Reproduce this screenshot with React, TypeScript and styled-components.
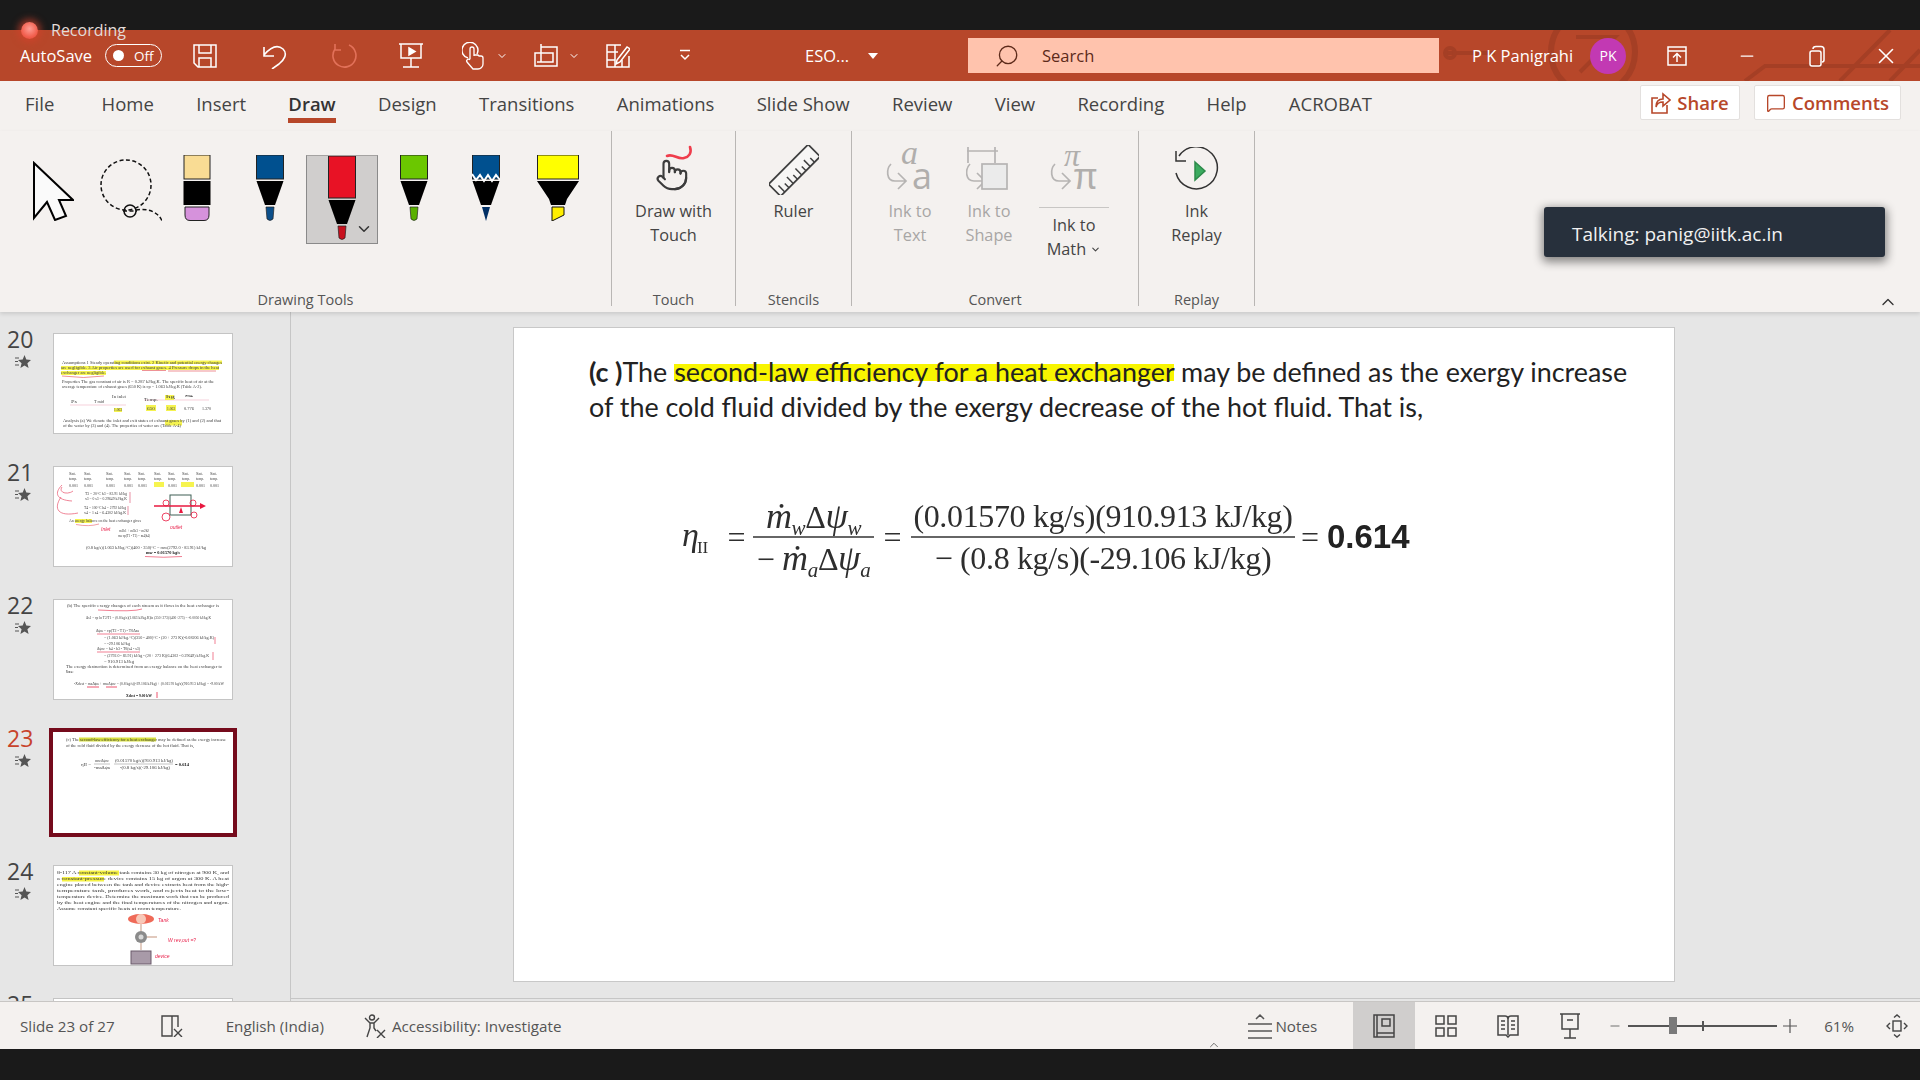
import React from "react";
import styled, { createGlobalStyle } from "styled-components";
import { ChevronDown, ChevronUp, Minus, Pointer, Search, X, MessageSquare } from "lucide-react";

const UI = `"Open Sans", "Noto Sans", sans-serif`;
const BRAND = "#b7472a";

const GlobalStyle = createGlobalStyle`
  html, body { margin: 0; padding: 0; background: #1a1a1a; }
  * { box-sizing: border-box; }
`;

const Shell = styled.div`
  position: relative;
  width: 1920px;
  height: 1080px;
  overflow: hidden;
  display: flex;
  flex-direction: column;
  background: #1a1a1a;
  font-family: ${UI};
`;

const TopStrip = styled.div`
  height: 30px;
  flex: none;
  background: #1a1a1a;
`;

const RecordingBadge = styled.div`
  position: absolute;
  left: 21px;
  top: 19px;
  z-index: 3;
  display: flex;
  align-items: center;
  gap: 13px;
  font-size: 16px;
  line-height: 22px;
  color: #e4dcd8;
`;

const RecordingDot = styled.span`
  width: 17px;
  height: 17px;
  border-radius: 50%;
  background: radial-gradient(circle at 50% 40%, #ff9d94 0%, #f2604f 60%, #e0402f 100%);
  box-shadow: 0 0 7px 3px rgba(214, 66, 44, 0.65);
`;

const TitleBar = styled.div`
  position: relative;
  height: 51px;
  flex: none;
  display: flex;
  align-items: center;
  background: ${BRAND};
  color: #fff;
  overflow: hidden;
`;

const Pattern = styled.svg`
  position: absolute;
  left: 0;
  top: 0;
  pointer-events: none;
`;

const AutoSave = styled.span`
  position: relative;
  margin-left: 20px;
  width: 85px;
  font-size: 16.5px;
`;

const Toggle = styled.span`
  position: relative;
  width: 57px;
  height: 23px;
  display: flex;
  align-items: center;
  gap: 10px;
  padding-left: 7px;
  border: 1.5px solid #fff;
  border-radius: 12px;
  font-size: 13.5px;
  margin-right: 8px;
`;

const Knob = styled.span`
  width: 11px;
  height: 11px;
  border-radius: 50%;
  background: #fff;
`;

const QatButton = styled.span<{ $w: number }>`
  position: relative;
  width: ${(p) => p.$w}px;
  flex: none;
  height: 32px;
  display: flex;
  align-items: center;
  justify-content: center;
  gap: 10px;
`;

const FileName = styled.span`
  position: relative;
  width: 246px;
  flex: none;
  display: flex;
  align-items: center;
  padding-left: 83px;
  font-size: 16.5px;
`;

const Caret = styled.span`
  margin-left: 19px;
  width: 0;
  height: 0;
  border-left: 5px solid transparent;
  border-right: 5px solid transparent;
  border-top: 6px solid #fff;
`;

const SearchBox = styled.div`
  position: relative;
  width: 471px;
  height: 35px;
  flex: none;
  display: flex;
  align-items: center;
  padding-left: 26px;
  gap: 22px;
  background: #ffc3ad;
  color: #5c2a1a;
  font-size: 16.5px;
`;

const SearchGlyph = styled(Search)`
  transform: scaleX(-1);
`;

const UserName = styled.span`
  position: relative;
  margin-left: 33px;
  width: 118px;
  flex: none;
  font-size: 16.5px;
  white-space: nowrap;
`;

const Avatar = styled.span`
  position: relative;
  width: 36px;
  height: 36px;
  flex: none;
  display: flex;
  align-items: center;
  justify-content: center;
  margin-right: 16px;
  border-radius: 50%;
  background: #c239b3;
  font-size: 14px;
`;

const TabRow = styled.div`
  height: 50px;
  flex: none;
  display: flex;
  align-items: flex-start;
  background: #f4f1ef;
`;

const TabList = styled.div`
  display: flex;
  gap: 42.3px;
  padding-left: 25px;
  padding-top: 10px;
  & > :first-child { margin-right: 5px; }
`;

const Tab = styled.span<{ $active?: boolean }>`
  position: relative;
  font-size: 18.5px;
  line-height: 26px;
  color: ${(p) => (p.$active ? "#333" : "#444")};
  font-weight: ${(p) => (p.$active ? 600 : 400)};
  white-space: nowrap;
  &::after {
    content: "";
    display: ${(p) => (p.$active ? "block" : "none")};
    position: absolute;
    left: 0;
    right: 0;
    top: 27px;
    height: 5px;
    background: ${BRAND};
  }
`;

const RightActions = styled.div`
  margin-left: auto;
  display: flex;
  gap: 14px;
  padding: 4px 19px 0 0;
`;

const ActionButton = styled.span<{ $w: number }>`
  width: ${(p) => p.$w}px;
  height: 35px;
  display: flex;
  align-items: center;
  justify-content: center;
  gap: 6px;
  background: #fff;
  border: 1px solid #e3e0de;
  border-radius: 2px;
  color: ${BRAND};
  font-size: 18.5px;
  font-weight: 600;
`;

const Ribbon = styled.div`
  position: relative;
  height: 181px;
  flex: none;
  display: flex;
  align-items: flex-start;
  background: #f4f1ef;
  box-shadow: 0 2px 4px rgba(0, 0, 0, 0.12);
  z-index: 1;
`;

const Group = styled.div<{ $w: number }>`
  width: ${(p) => p.$w}px;
  height: 175px;
  flex: none;
  display: flex;
  flex-direction: column;
  border-right: 1px solid #b9b6b4;
`;

const GroupBody = styled.div<{ $pl?: number; $center?: boolean }>`
  flex: 1;
  display: flex;
  align-items: flex-start;
  padding-left: ${(p) => p.$pl ?? 0}px;
  justify-content: ${(p) => (p.$center ? "center" : "flex-start")};
`;

const GroupLabel = styled.div`
  height: 20px;
  margin-bottom: -4px;
  text-align: center;
  font-size: 14.5px;
  line-height: 20px;
  color: #555;
`;

const ToolSlot = styled.div<{ $ml: number; $mt?: number }>`
  margin-left: ${(p) => p.$ml}px;
  margin-top: ${(p) => 24 + (p.$mt ?? 0)}px;
  display: flex;
  flex: none;
`;

const SelectedTool = styled.div`
  position: relative;
  width: 72px;
  height: 89px;
  margin-left: 22px;
  margin-top: 24px;
  display: flex;
  justify-content: center;
  background: #d0cecd;
  border: 1px solid #8a8a8a;
  border-top-color: #a5a3a2;
  flex: none;
`;

const ToolChevron = styled.span`
  position: absolute;
  right: 4px;
  bottom: 5px;
  display: flex;
  color: #333;
`;

const Command = styled.div<{ $w: number; $disabled?: boolean }>`
  width: ${(p) => p.$w}px;
  flex: none;
  display: flex;
  flex-direction: column;
  align-items: center;
  padding-top: 9px;
  color: ${(p) => (p.$disabled ? "#a8a6a5" : "#444")};
`;

const CommandIcon = styled.div`
  height: 59px;
  display: flex;
  align-items: center;
  justify-content: center;
`;

const CommandText = styled.div`
  display: flex;
  flex-direction: column;
  align-items: center;
  font-size: 16.3px;
  line-height: 24px;
  white-space: nowrap;
`;

const MathDivider = styled.div`
  width: 70px;
  height: 1px;
  margin: 8px 0 5px;
  background: #c8c6c4;
`;

const Collapse = styled.span`
  position: absolute;
  right: 22px;
  bottom: 0;
  display: flex;
  color: #333;
`;

const Tooltip = styled.div`
  position: absolute;
  left: 1544px;
  top: 207px;
  width: 341px;
  height: 50px;
  z-index: 4;
  display: flex;
  align-items: center;
  padding: 3px 0 0 28px;
  background: #27303c;
  border-radius: 3px;
  box-shadow: 0 3px 10px 2px rgba(0, 0, 0, 0.45);
  color: #f1f1f1;
  font-size: 19px;
`;

const Workspace = styled.div`
  height: 689px;
  flex: none;
  display: flex;
  background: #e6e6e6;
`;

const Sidebar = styled.div`
  width: 291px;
  flex: none;
  padding-top: 21px;
  overflow: hidden;
  border-right: 1px solid #c6c6c6;
`;

const SlideRow = styled.div`
  height: 133px;
  display: flex;
`;

const RowMeta = styled.div`
  width: 53px;
  flex: none;
  padding-left: 7px;
  display: flex;
  flex-direction: column;
  margin-top: -9px;
`;

const RowNumber = styled.span<{ $active?: boolean }>`
  font-size: 23px;
  line-height: 31px;
  color: ${(p) => (p.$active ? "#c8432b" : "#444")};
`;

const StarIcon = styled.svg`
  margin-left: 8px;
`;

const Thumb = styled.div<{ $active?: boolean }>`
  width: 180px;
  height: 101px;
  flex: none;
  background: #fff;
  border: 1px solid ${(p) => (p.$active ? "#fff" : "#c4c4c4")};
  box-shadow: ${(p) => (p.$active ? "0 0 0 4px #750b1c" : "none")};
  overflow: hidden;
`;

const ThumbArt = styled.svg`
  display: block;
  filter: blur(0.3px);
  text {
    font-family: "Liberation Serif", serif;
    font-size: 3.7px;
    fill: #3c3c3c;
  }
  .b { font-weight: 700; fill: #111; }
  .big { font-size: 4.6px; fill: #333; }
  .hand { font-family: "Liberation Sans", sans-serif; font-size: 5px; fill: #e8204a; font-style: italic; }
`;

const Editor = styled.div`
  flex: 1;
  display: flex;
  flex-direction: column;
`;

const Canvas = styled.div`
  flex: 1;
  padding: 15px 0 0 222px;
`;

const ScrollLine = styled.div`
  height: 1px;
  margin-bottom: 2px;
  background: #c6c6c6;
`;

const Slide = styled.div`
  width: 1162px;
  height: 655px;
  padding: 26px 0 0 75px;
  background: #fff;
  border: 1px solid #c8c8c8;
`;

const SlideText = styled.p`
  margin: 0;
  width: 1060px;
  font-family: Lato, "Open Sans", sans-serif;
  font-size: 26.9px;
  line-height: 35px;
  color: #222;
  white-space: nowrap;
`;

const Mark = styled.span`
  background: linear-gradient(transparent 26%, #f8f500 26%, #f8f500 80%, transparent 80%);
`;

const Equation = styled.div`
  display: flex;
  align-items: center;
  margin: 72px 0 0 93px;
  font-family: "Liberation Serif", serif;
  font-size: 32px;
  color: #2e2e2e;
  filter: blur(0.3px);
`;

const Eta = styled.span`
  font-style: italic;
  font-size: 34px;
  width: 38px;
  flex: none;
  sub { font-style: normal; font-size: 17px; margin-left: -2px; }
`;

const Equal = styled.span<{ $w: number }>`
  width: ${(p) => p.$w}px;
  text-align: center;
  flex: none;
`;

const Fraction = styled.div<{ $w: number }>`
  width: ${(p) => p.$w}px;
  flex: none;
  display: flex;
  flex-direction: column;
  align-items: center;
`;

const FracPart = styled.div`
  height: 40px;
  line-height: 40px;
  white-space: nowrap;
  letter-spacing: -0.35px;
`;

const Symbol = styled.i`
  font-size: 36px;
  sub { font-size: 21px; vertical-align: -7px; line-height: 0; }
`;

const FracRule = styled.div`
  width: 100%;
  height: 2px;
  background: #666;
`;

const Result = styled.b`
  margin-left: 2px;
  font-family: "Liberation Sans", sans-serif;
  font-size: 33px;
  color: #222;
`;

const StatusBar = styled.div`
  position: relative;
  height: 48px;
  flex: none;
  display: flex;
  align-items: center;
  background: #f4f1ef;
  border-top: 1px solid #c8c6c4;
  font-size: 15.2px;
  color: #555;
`;

const StatusItem = styled.span<{ $ml: number; $gap?: number }>`
  margin-left: ${(p) => p.$ml}px;
  flex: none;
  display: flex;
  align-items: center;
  gap: ${(p) => p.$gap ?? 0}px;
  white-space: nowrap;
`;

const ViewButton = styled.span<{ $active?: boolean }>`
  width: 62px;
  height: 47px;
  flex: none;
  display: flex;
  align-items: center;
  justify-content: center;
  background: ${(p) => (p.$active ? "#d0cecd" : "transparent")};
`;

const ZoomTrack = styled.div`
  position: relative;
  width: 149px;
  height: 2px;
  margin: 0 6px;
  flex: none;
  background: #555;
`;

const ZoomThumb = styled.span`
  position: absolute;
  left: 41px;
  top: -8px;
  width: 8px;
  height: 17px;
  background: #7a7a7a;
`;

const ZoomTick = styled.span`
  position: absolute;
  left: 74px;
  top: -4px;
  width: 2px;
  height: 10px;
  background: #555;
`;

const NoteCaret = styled.span`
  position: absolute;
  left: 1207px;
  bottom: -3px;
  display: flex;
  color: #555;
`;

type PenProps = {
  body: string;
  tip: string;
  bodyH?: number;
  zigzag?: boolean;
  sharp?: boolean;
};

// fine-tip pen: body, white gap, black cone, coloured point
const Pen = ({ body, tip, bodyH = 24, zigzag, sharp }: PenProps) => {
  const c = bodyH + 2;
  const t = c + 26;
  return (
    <svg width="28" height={t + (bodyH > 24 ? 15 : 14)}>
      <rect x="0.5" y="0" width="27" height={bodyH} fill={body} stroke="#222" strokeWidth="1" />
      <path d={`M0.5 ${c} H27.5 L19 ${c + 24} H9 Z`} fill="#000" />
      {zigzag && (
        <path d={`M0 ${c - 7} L4 ${c - 1} L8 ${c - 6} L12 ${c} L16 ${c - 6} L20 ${c} L24 ${c - 6} L28 ${c - 1}`} fill="none" stroke="#fff" strokeWidth="2" />
      )}
      {sharp ? (
        <path d={`M10 ${t} H18 L14 ${t + 14} Z`} fill={tip} />
      ) : (
        <path d={`M10 ${t} H18 L17 ${t + 12} Q14 ${t + 15} 11 ${t + 12} Z`} fill={tip} stroke="#222" strokeWidth="0.7" />
      )}
    </svg>
  );
};

const MarkerPen = () => (
  <svg width="28" height="66">
    <rect x="1" y="0" width="26" height="24" fill="#f9dc94" stroke="#222" strokeWidth="1" />
    <rect x="0.5" y="26" width="27" height="24" fill="#000" />
    <path d="M2 52 H26 V60 Q26 65.5 21 65.5 H7 Q2 65.5 2 60 Z" fill="#d692dc" stroke="#222" strokeWidth="1" />
  </svg>
);

const Highlighter = () => (
  <svg width="42" height="66">
    <rect x="0.5" y="0" width="41" height="24" fill="#ffff00" stroke="#222" strokeWidth="1" />
    <path d="M0 26 H42 L30 44 L28 50 H14 L12 44 Z" fill="#000" />
    <path d="M15 52 H27 V60 L15 66 Z" fill="#ffee00" stroke="#111" strokeWidth="1" />
  </svg>
);

const Cursor = () => (
  <svg width="41" height="60">
    <path d="M1 2 L40 39 L26 39 L33 55 L22 59 L14 41 L1 57 Z" fill="#fafafa" stroke="#000" strokeWidth="2" strokeLinejoin="miter" />
  </svg>
);

const Lasso = () => (
  <svg width="62" height="62" fill="none" stroke="#111" strokeWidth="1.5">
    <circle cx="26" cy="26" r="25" strokeDasharray="4 2.5" />
    <circle cx="30" cy="52" r="6" />
    <path d="M23 52 H37 M36 51 C46 49 58 52 62 62" strokeDasharray="4 2.5" />
  </svg>
);

const DrawTouchIcon = () => (
  <svg width="44" height="50" viewBox="0 0 44 50" fill="none">
    <path d="M15 11 C21 8 26 15 32 13 C37 12 40 8 38 2" stroke="#ef3d4c" strokeWidth="2.6" strokeLinecap="round" />
    <foreignObject x="3" y="13" width="36" height="36">
      <Pointer size={34} strokeWidth={1.5} color="#3c3c3c" />
    </foreignObject>
  </svg>
);

const RulerIcon = () => (
  <svg width="50" height="50" viewBox="0 0 50 50" fill="none" stroke="#3e3e3e" strokeWidth="1.8">
    <g transform="rotate(-45 25 25)">
      <rect x="-3" y="17" width="56" height="17" fill="#f7f6f5" />
      {[3, 9, 15, 21, 27, 33, 39, 45].map((x, i) => (
        <path key={x} d={`M${x} 34 V${i % 2 ? 28 : 25}`} strokeWidth="1.5" />
      ))}
    </g>
  </svg>
);

const InkArrow = () => (
  <path d="M4 17 C-1 22 -1 34 8 34 H19 M11 26 L19 34 L11 42" fill="none" stroke="#b6b4b3" strokeWidth="1.7" />
);

const InkIconText = styled.svg`
  overflow: visible;
  text { fill: #b0aeac; }
`;

const InkTextIcon = () => (
  <InkIconText width="46" height="46" viewBox="0 0 46 46">
    <InkArrow />
    <text x="14" y="17" fontFamily="Liberation Serif, serif" fontStyle="italic" fontSize="34">a</text>
    <text x="25" y="42" fontFamily="Open Sans, sans-serif" fontSize="36">a</text>
  </InkIconText>
);

const InkShapeIcon = () => (
  <svg width="46" height="46" viewBox="0 0 46 46">
    <path d="M1 4 H32 M2 0 V16 M29 0 V16" fill="none" stroke="#b6b4b3" strokeWidth="1.7" />
    <InkArrow />
    <rect x="16" y="17" width="25" height="25" fill="#ebebeb" stroke="#b6b4b3" strokeWidth="1.7" />
  </svg>
);

const InkMathIcon = () => (
  <InkIconText width="46" height="46" viewBox="0 0 46 46">
    <InkArrow />
    <text x="13" y="19" fontFamily="Liberation Serif, serif" fontStyle="italic" fontSize="32">π</text>
    <text x="22" y="42" fontFamily="Liberation Sans, sans-serif" fontSize="36">π</text>
  </InkIconText>
);

const ReplayIcon = () => (
  <svg width="46" height="46" viewBox="0 0 46 46" fill="none" stroke="#333" strokeWidth="1.5">
    <path d="M5 9 A21 21 0 1 1 2 26" />
    <path d="M2 4 V14 H12" />
    <path d="M21 15 L31 24 L21 33 Z" fill="#3bab5f" stroke="#2c8a4a" />
  </svg>
);

const QatStroke = { fill: "none", stroke: "#fff", strokeWidth: 1.5 };

const SaveIcon = () => (
  <svg width="24" height="24" {...QatStroke}>
    <path d="M1 1 H23 V23 H5 L1 19 Z" />
    <path d="M6 1 V9 H18 V1 M6 23 V14 H18 V23" />
  </svg>
);

const UndoIcon = () => (
  <svg width="24" height="26" {...QatStroke}>
    <path d="M1 4 V13 H11 M1 12 C7 5 14 1 20 6 C25 11 21 17 16 21 L9 26" strokeWidth="1.6" />
  </svg>
);

const RedoIcon = () => (
  <svg width="26" height="26" fill="none" stroke="#e27159" strokeWidth="1.6">
    <path d="M18 2 A11.5 11.5 0 1 1 4 6 M4 1 V7 H10" />
  </svg>
);

const PresentIcon = () => (
  <svg width="24" height="26" {...QatStroke}>
    <path d="M0 1 H24 M2 1 V15 H22 V1 M12 15 V24 M4 24 H20" />
    <path d="M10 5 L16 8.5 L10 12 Z" fill="#fff" />
  </svg>
);

const TouchModeIcon = () => (
  <svg width="24" height="28" viewBox="0 0 24 28" {...QatStroke}>
    <path d="M6 16 A8 8 0 1 1 15 12" />
    <path d="M8 17 V7 a2 2 0 0 1 4 0 V14 M12 13 h3 a2 2 0 0 1 2 1 h2 a2 2 0 0 1 2 2 V22 a5 5 0 0 1 -5 5 H11 L5 20 a1.5 1.5 0 0 1 3 -2" strokeWidth="1.3" />
  </svg>
);

const FormIcon = () => (
  <svg width="24" height="24" {...QatStroke}>
    <path d="M7 3 H23 V22 H1 V9 H19 V18 H3 M7 0 V18" />
  </svg>
);

const EditIcon = () => (
  <svg width="24" height="24" {...QatStroke}>
    <path d="M15 1 H1 V23 H23 V12 M1 8 H12 M1 16 H9 M9 1 V23 M16 16 V23" />
    <path d="M11 16 L21 3 L24 5 L14 18 L10 20 Z" fill="#b7472a" />
  </svg>
);

const CustomizeIcon = () => (
  <svg width="12" height="13" {...QatStroke}>
    <path d="M1 1.5 H11 M2 6 L6 10 L10 6" />
  </svg>
);

const RibbonDisplayIcon = () => (
  <svg width="20" height="20" {...QatStroke}>
    <path d="M1 1 H19 V19 H1 Z M1 5 H19 M10 16 V8 M6 11.5 L10 7.5 L14 11.5" />
  </svg>
);

const RestoreIcon = () => (
  <svg width="16" height="22" {...QatStroke}>
    <rect x="1" y="6" width="11" height="15" rx="2" />
    <path d="M4 4 Q4 1.5 7 1.5 H12 Q15 1.5 15 4.5 V15 Q15 17 13 17" />
  </svg>
);

const ShareIcon = () => (
  <svg width="20" height="22" fill="none" stroke={BRAND} strokeWidth="1.6">
    <path d="M7 6 H1 V21 H16 V13" />
    <path d="M5 15 C5 9 8 7 12 7 V2 L19 8 L12 14 V10 C9 10 6 11 5 15 Z" />
  </svg>
);

const NotesSmallIcon = () => (
  <svg width="22" height="22" fill="none" stroke="#444" strokeWidth="1.4">
    <path d="M1 1 H11 V21 H1 Z M11 1 H17 V12 M13 14 L21 22 M21 14 L13 22" />
  </svg>
);

const AccessIcon = () => (
  <svg width="22" height="24" fill="none" stroke="#444" strokeWidth="1.4">
    <circle cx="8" cy="3.5" r="2.5" />
    <path d="M1 4 L6 9 H10 L15 4 M6 9 V14 L3 23 M10 9 V14 L12 17 M13 16 L21 24 M21 16 L13 24" />
  </svg>
);

const NotesIcon = () => (
  <svg width="24" height="26" fill="none" stroke="#555" strokeWidth="1.5">
    <path d="M8 6 L12 2 L16 6 M0 11 H24 M0 18 H24 M0 25 H24" />
  </svg>
);

const NormalView = () => (
  <svg width="22" height="24" fill="none" stroke="#444" strokeWidth="1.5">
    <path d="M1 1 H21 V23 H1 Z M4 1 V23 M4 19 H21 M9 5 H17 V12 H9 Z" />
  </svg>
);

const SorterView = () => (
  <svg width="22" height="22" fill="none" stroke="#444" strokeWidth="1.5">
    <rect x="1" y="1" width="8" height="8" />
    <rect x="13" y="1" width="8" height="8" />
    <rect x="1" y="13" width="8" height="8" />
    <rect x="13" y="13" width="8" height="8" />
  </svg>
);

const ReadingView = () => (
  <svg width="22" height="24" fill="none" stroke="#444" strokeWidth="1.5">
    <path d="M1 2 H8 Q11 2 11 5 Q11 2 14 2 H21 V21 H13 L11 23 L9 21 H1 Z M11 5 V21 M4 7 H8 M4 11 H8 M4 15 H8 M14 7 H18 M14 11 H18 M14 15 H18" />
  </svg>
);

const ShowView = () => (
  <svg width="20" height="26" fill="none" stroke="#444" strokeWidth="1.5">
    <path d="M0 1 H20 M2 1 V16 H18 V1 M10 16 V25 M4 25 H16 M7 7 H13" />
  </svg>
);

const FitIcon = () => (
  <svg width="22" height="24" fill="none" stroke="#444" strokeWidth="1.4">
    <rect x="7" y="7" width="8" height="10" />
    <path d="M8 3.5 L11 1 L14 3.5 M8 20.5 L11 23 L14 20.5 M4 9 L1 12 L4 15 M18 9 L21 12 L18 15" />
  </svg>
);

type LineProps = { x: number; y: number; w: number; t: string; c?: string };
const L = ({ x, y, w, t, c }: LineProps) => (
  <text x={x} y={y} textLength={w} lengthAdjust="spacingAndGlyphs" className={c}>
    {t}
  </text>
);

const Art = ({ children }: { children: React.ReactNode }) => (
  <ThumbArt width="178" height="99" viewBox="0 0 178 99">
    {children}
  </ThumbArt>
);

const Slide20 = () => (
  <Art>
    <path d="M60 26.5 H168 V30 H60 Z M7 32 H165 V36 H7 Z M7 37 H52 V41 H7 Z" fill="#f7f550" />
    <L x={8} y={30} w={160} t="Assumptions 1 Steady operating conditions exist. 2 Kinetic and potential energy changes" />
    <L x={7} y={35} w={158} t="are negligible. 3 Air properties are used for exhaust gases. 4 Pressure drops in the heat" />
    <L x={7} y={40} w={45} t="exchanger are negligible." />
    <path d="M8 42 Q30 45 50 42 M88 36.5 H112 M114 37 H162" stroke="#e2484f" strokeWidth="0.6" fill="none" />
    <L x={8} y={49} w={152} t="Properties The gas constant of air is R = 0.287 kJ/kg.K. The specific heat of air at the" />
    <L x={8} y={54} w={140} t="average temperature of exhaust gases (650 K) is cp = 1.063 kJ/kg.K (Table A-2)." />
    <path d="M90 66 H155 M16 71 H72" stroke="#f0b4c4" strokeWidth="0.6" />
    <path d="M111 61 H120 V66 H111 Z M92 71 H102 V77 H92 Z M112 71 H122 V77 H112 Z M60 74 H68 V78 H60 Z" fill="#f5f350" />
    <L x={58} y={64} w={14} t="In inlet" />
    <L x={17} y={69} w={6} t="Ps" />
    <L x={40} y={69} w={10} t="T mid" />
    <L x={90} y={67} w={14} t="Temp." />
    <L x={112} y={64} w={9} t="hg" />
    <L x={130} y={63} w={10} t="s" />
    <L x={93} y={76} w={8} t="650" />
    <L x={113} y={76} w={8} t="1.063" />
    <L x={130} y={76} w={10} t="0.776" />
    <L x={148} y={76} w={9} t="1.370" />
    <L x={60} y={77} w={8} t="1.063" />
    <path d="M111 86 H128 V91.5 H111 Z" fill="#f5f350" />
    <L x={9} y={88} w={158} t="Analysis (a) We denote the inlet and exit states of exhaust gases by (1) and (2) and that" />
    <L x={9} y={93} w={118} t="of the water by (3) and (4). The properties of water are (Table A-4)" />
  </Art>
);

const Slide21 = () => (
  <Art>
    {[15, 30, 52, 70, 84, 100, 114, 128, 142, 156].map((x) => (
      <React.Fragment key={x}>
        <L x={x} y={8} w={7} t="Sat." />
        <L x={x} y={13} w={8} t="temp." />
        <L x={x} y={20} w={9} t="0.001" />
      </React.Fragment>
    ))}
    <path d="M100 15 H110 V20 H100 Z M127 15 H140 V20 H127 Z" fill="#f6f450" />
    <path d="M8 18 C0 26 2 33 18 34 M8 20 C4 26 14 28 19 24 M7 30 C-1 42 4 50 24 46" stroke="#e8506a" strokeWidth="0.7" fill="none" />
    <L x={31} y={28} w={42} t="T3 = 20°C  h3 = 83.91 kJ/kg" />
    <L x={31} y={33} w={42} t="x3 = 0  s3 = 0.29649 kJ/kg.K" />
    <L x={30} y={42} w={42} t="T4 = 100°C h4 = 2792 kJ/kg" />
    <L x={30} y={47} w={42} t="x4 = 1  s4 = 6.4302 kJ/kg.K" />
    <path d="M76 25 V36 M74 39 V48" stroke="#d8486a" strokeWidth="0.6" />
    <rect x="116" y="28" width="21" height="20" fill="#fff" stroke="#3f5f55" strokeWidth="1" />
    <path d="M100 39 H150" stroke="#e8183f" strokeWidth="1.4" />
    <path d="M146 36 L152 39 L146 42 Z M127 40 L125 46 L129 46 Z" fill="#e8183f" />
    <circle cx="112" cy="36" r="3" fill="none" stroke="#e8183f" strokeWidth="0.8" />
    <circle cx="139" cy="36" r="3" fill="none" stroke="#e8183f" strokeWidth="0.8" />
    <circle cx="112" cy="50" r="4" fill="none" stroke="#e8183f" strokeWidth="0.8" />
    <circle cx="140" cy="48" r="3" fill="none" stroke="#e8183f" strokeWidth="0.8" />
    <path d="M21 52 H38 V56 H21 Z" fill="#f6f450" />
    <L x={15} y={55} w={72} t="An energy balance on the heat exchanger gives" />
    <path d="M22 57.5 Q35 60 45 57" stroke="#e8606a" strokeWidth="0.6" fill="none" />
    <text className="hand" x="47" y="64">Inlet</text>
    <text className="hand" x="116" y="62">outlet</text>
    <L x={65} y={65} w={30} t="m1h1 + m3h3 = m2h2" />
    <L x={64} y={70} w={32} t="ma cp(T1 - T2) = m4(h4)" />
    <L x={32} y={82} w={120} t="(0.8 kg/s)(1.063 kJ/kg.°C)(400 - 350)°C = mw(2792.0 - 83.91) kJ/kg" />
    <L x={92} y={87} w={34} t="mw = 0.01570 kg/s" c="b" />
    <path d="M91 89.5 Q110 91 128 89.5" stroke="#e8284a" strokeWidth="0.6" fill="none" />
  </Art>
);

const Slide22 = () => (
  <Art>
    <L x={13} y={7} w={152} t="(b) The specific exergy changes of each stream as it flows in the heat exchanger is" />
    <path d="M44 10 Q80 12 88 9" stroke="#e8284a" strokeWidth="0.6" fill="none" />
    <L x={32} y={19} w={125} t="Δs1 = cp ln T2/T1 = (0.8 kg/s)(1.063 kJ/kg.K)ln (350+273)/(400+273) = -0.0050 kJ/kg.K" />
    <L x={42} y={32} w={43} t="Δψa = cp(T2 - T1) - T0Δsa" />
    <L x={50} y={39} w={110} t="= (1.063 kJ/kg.°C)(350 - 400)°C - (20 + 273 K)(-0.08206 kJ/kg.K)" />
    <L x={50} y={45} w={26} t="= -29.106 kJ/kg" />
    <L x={43} y={50} w={43} t="Δψw = h4 - h3 - T0(s4 - s3)" />
    <L x={50} y={57} w={105} t="= (2792.0 - 83.91) kJ/kg - (20 + 273 K)(6.4302 - 0.29649) kJ/kg.K" />
    <L x={50} y={63} w={30} t="= 910.913 kJ/kg" />
    <path d="M161 37 V44 M159 52 V60 M43 34 H86 M43 52 H86" stroke="#e8284a" strokeWidth="0.6" fill="none" />
    <L x={12} y={68} w={156} t="The exergy destruction is determined from an exergy balance on the heat exchanger to" />
    <L x={12} y={73} w={8} t="be" />
    <L x={20} y={85} w={150} t="-Xdest = maΔψa + mwΔψw = (0.8 kg/s)(-29.106 kJ/kg) + (0.01570 kg/s)(910.913 kJ/kg) = -9.00 kW" />
    <path d="M33 87 H45 M52 87 H63" stroke="#e8284a" strokeWidth="0.8" fill="none" />
    <L x={72} y={97} w={26} t="Xdest = 9.00 kW" c="b" />
    <path d="M103 92 V98" stroke="#e8284a" strokeWidth="0.8" />
  </Art>
);

const Slide23 = () => (
  <Art>
    <path d="M25 4.5 H102 V8.5 H25 Z" fill="#d8e040" />
    <L x={12} y={8} w={160} t="(c) The second-law efficiency for a heat exchanger may be defined as the exergy increase" />
    <L x={12} y={14} w={128} t="of the cold fluid divided by the exergy decrease of the hot fluid. That is," />
    <L x={27} y={33} w={10} t="ηII =" />
    <L x={41} y={29} w={14} t="mwΔψw" />
    <L x={40} y={36} w={16} t="-maΔψa" />
    <L x={61} y={29} w={58} t="(0.01570 kg/s)(910.913 kJ/kg)" />
    <L x={66} y={36} w={50} t="-(0.8 kg/s)(-29.106 kJ/kg)" />
    <L x={121} y={33} w={14} t="= 0.614" c="b" />
    <path d="M40 31 H56 M60 31 H119" stroke="#666" strokeWidth="0.4" />
  </Art>
);

const Slide24 = () => (
  <Art>
    <path d="M25 4.5 H65 V9.5 H25 Z M8 11 H50 V15.5 H8 Z" fill="#f5f244" />
    <L x={3} y={8} w={172} c="big" t="8-117  A constant-volume tank contains 30 kg of nitrogen at 900 K, and" />
    <L x={3} y={14} w={172} c="big" t="a constant-pressure device contains 15 kg of argon at 300 K. A heat" />
    <L x={3} y={20} w={172} c="big" t="engine placed between the tank and device extracts heat from the high-" />
    <L x={3} y={26} w={172} c="big" t="temperature tank, produces work, and rejects heat to the low-" />
    <L x={3} y={32} w={172} c="big" t="temperature device. Determine the maximum work that can be produced" />
    <L x={3} y={38} w={172} c="big" t="by the heat engine and the final temperatures of the nitrogen and argon." />
    <L x={3} y={44} w={124} c="big" t="Assume constant specific heats at room temperature." />
    <ellipse cx="87" cy="53" rx="13" ry="5" fill="#ef6a58" />
    <ellipse cx="87" cy="53" rx="5" ry="5" fill="#f8c8b8" />
    <circle cx="87" cy="71" r="6" fill="#8b8b8b" />
    <circle cx="87" cy="71" r="2.5" fill="#d8d8d8" />
    <path d="M87 58 V65 M87 77 V84 M93 71 H103" stroke="#d8b8a8" strokeWidth="1.4" />
    <rect x="77" y="85" width="20" height="13" fill="#a89aa8" stroke="#6a5a6a" strokeWidth="1" />
    <text className="hand" x="104" y="56">Tank</text>
    <text className="hand" x="114" y="76">W rev,out =?</text>
    <text className="hand" x="101" y="92">device</text>
  </Art>
);

const StarMark = () => (
  <StarIcon width="16" height="14" viewBox="0 0 16 14" fill="#555">
    <path d="M9.5 0 L11.3 4.6 L16 5 L12.4 8.2 L13.6 13 L9.5 10.4 L5.4 13 L6.6 8.2 L3 5 L7.7 4.6 Z" />
    <path d="M0 3 H4 M0 6.5 H3 M0 10 H4" stroke="#555" strokeWidth="1" />
  </StarIcon>
);

const slides = [
  { n: 20, art: <Slide20 /> },
  { n: 21, art: <Slide21 /> },
  { n: 22, art: <Slide22 /> },
  { n: 23, art: <Slide23 />, active: true },
  { n: 24, art: <Slide24 /> },
  { n: 25, art: null },
];

const tabs = ["File", "Home", "Insert", "Draw", "Design", "Transitions", "Animations", "Slide Show", "Review", "View", "Recording", "Help", "ACROBAT"];

export default function App() {
  return (
    <Shell>
      <GlobalStyle />
      <TopStrip />
      <RecordingBadge>
        <RecordingDot />
        Recording
      </RecordingBadge>

      <TitleBar>
        <Pattern width="1920" height="51" fill="none" stroke="#a53f25" strokeWidth="4">
          <circle cx="1593" cy="22" r="42" strokeWidth="6" />
          <path d="M1445 23 H1495 M1576 7 H1615 L1580 42 M1745 51 L1765 36 H1920 M1840 51 L1890 0 M1890 51 L1920 20" />
          <circle cx="1450" cy="23" r="5" />
        </Pattern>
        <AutoSave>AutoSave</AutoSave>
        <Toggle>
          <Knob />
          Off
        </Toggle>
        <QatButton $w={70}><SaveIcon /></QatButton>
        <QatButton $w={69}><UndoIcon /></QatButton>
        <QatButton $w={69}><RedoIcon /></QatButton>
        <QatButton $w={66}><PresentIcon /></QatButton>
        <QatButton $w={82}><TouchModeIcon /><ChevronDown size={12} strokeWidth={2} /></QatButton>
        <QatButton $w={62}><FormIcon /><ChevronDown size={12} strokeWidth={2} /></QatButton>
        <QatButton $w={60}><EditIcon /></QatButton>
        <QatButton $w={74}><CustomizeIcon /></QatButton>
        <FileName>
          ESO...
          <Caret />
        </FileName>
        <SearchBox>
          <SearchGlyph size={26} strokeWidth={1.2} />
          Search
        </SearchBox>
        <UserName>P K Panigrahi</UserName>
        <Avatar>PK</Avatar>
        <QatButton $w={70}><RibbonDisplayIcon /></QatButton>
        <QatButton $w={70}><Minus size={20} strokeWidth={1.5} /></QatButton>
        <QatButton $w={69}><RestoreIcon /></QatButton>
        <QatButton $w={69}><X size={26} strokeWidth={1.5} /></QatButton>
      </TitleBar>

      <TabRow>
        <TabList>
          {tabs.map((t) => (
            <Tab key={t} $active={t === "Draw"}>{t}</Tab>
          ))}
        </TabList>
        <RightActions>
          <ActionButton $w={100}><ShareIcon />Share</ActionButton>
          <ActionButton $w={147}><MessageSquare size={20} strokeWidth={1.6} />Comments</ActionButton>
        </RightActions>
      </TabRow>

      <Ribbon>
        <Group $w={612}>
          <GroupBody>
            <ToolSlot $ml={33} $mt={6}><Cursor /></ToolSlot>
            <ToolSlot $ml={26} $mt={4}><Lasso /></ToolSlot>
            <ToolSlot $ml={21}><MarkerPen /></ToolSlot>
            <ToolSlot $ml={45}><Pen body="#00508f" tip="#0b4f8a" /></ToolSlot>
            <SelectedTool>
              <Pen body="#e81225" tip="#c8101e" bodyH={42} />
              <ToolChevron><ChevronDown size={18} strokeWidth={2} /></ToolChevron>
            </SelectedTool>
            <ToolSlot $ml={22}><Pen body="#6bc700" tip="#59b000" /></ToolSlot>
            <ToolSlot $ml={44}><Pen body="#00508f" tip="#002f65" zigzag sharp /></ToolSlot>
            <ToolSlot $ml={37}><Highlighter /></ToolSlot>
          </GroupBody>
          <GroupLabel>Drawing Tools</GroupLabel>
        </Group>

        <Group $w={124}>
          <GroupBody $center>
            <Command $w={110}>
              <CommandIcon><DrawTouchIcon /></CommandIcon>
              <CommandText><span>Draw with</span><span>Touch</span></CommandText>
            </Command>
          </GroupBody>
          <GroupLabel>Touch</GroupLabel>
        </Group>

        <Group $w={116}>
          <GroupBody $center>
            <Command $w={100}>
              <CommandIcon><RulerIcon /></CommandIcon>
              <CommandText><span>Ruler</span></CommandText>
            </Command>
          </GroupBody>
          <GroupLabel>Stencils</GroupLabel>
        </Group>

        <Group $w={287}>
          <GroupBody $pl={18}>
            <Command $w={80} $disabled>
              <CommandIcon><InkTextIcon /></CommandIcon>
              <CommandText><span>Ink to</span><span>Text</span></CommandText>
            </Command>
            <Command $w={78} $disabled>
              <CommandIcon><InkShapeIcon /></CommandIcon>
              <CommandText><span>Ink to</span><span>Shape</span></CommandText>
            </Command>
            <Command $w={92}>
              <CommandIcon><InkMathIcon /></CommandIcon>
              <MathDivider />
              <CommandText>
                <span>Ink to</span>
                <span>Math <ChevronDown size={11} strokeWidth={2.4} /></span>
              </CommandText>
            </Command>
          </GroupBody>
          <GroupLabel>Convert</GroupLabel>
        </Group>

        <Group $w={116}>
          <GroupBody $center>
            <Command $w={100}>
              <CommandIcon><ReplayIcon /></CommandIcon>
              <CommandText><span>Ink</span><span>Replay</span></CommandText>
            </Command>
          </GroupBody>
          <GroupLabel>Replay</GroupLabel>
        </Group>
        <Collapse><ChevronUp size={20} strokeWidth={1.6} /></Collapse>
      </Ribbon>

      <Tooltip>Talking: panig@iitk.ac.in</Tooltip>

      <Workspace>
        <Sidebar>
          {slides.map((s) => (
            <SlideRow key={s.n}>
              <RowMeta>
                <RowNumber $active={s.active}>{s.n}</RowNumber>
                <StarMark />
              </RowMeta>
              <Thumb $active={s.active}>{s.art}</Thumb>
            </SlideRow>
          ))}
        </Sidebar>
        <Editor>
          <Canvas>
            <Slide>
              <SlideText>
                <b>(c )</b>The <Mark>second-law efficiency for a heat exchanger</Mark> may be defined as the exergy increase
                <br />
                of the cold fluid divided by the exergy decrease of the hot fluid. That is,
              </SlideText>
              <Equation>
                <Eta>η<sub>II</sub></Eta>
                <Equal $w={33}>=</Equal>
                <Fraction $w={121}>
                  <FracPart><Symbol>ṁ<sub>w</sub></Symbol>Δ<Symbol>ψ<sub>w</sub></Symbol></FracPart>
                  <FracRule />
                  <FracPart>− <Symbol>ṁ<sub>a</sub></Symbol>Δ<Symbol>ψ<sub>a</sub></Symbol></FracPart>
                </Fraction>
                <Equal $w={37}>=</Equal>
                <Fraction $w={384}>
                  <FracPart>(0.01570 kg/s)(910.913 kJ/kg)</FracPart>
                  <FracRule />
                  <FracPart>− (0.8 kg/s)(-29.106 kJ/kg)</FracPart>
                </Fraction>
                <Equal $w={30}>=</Equal>
                <Result>0.614</Result>
              </Equation>
            </Slide>
          </Canvas>
          <ScrollLine />
        </Editor>
      </Workspace>

      <StatusBar>
        <StatusItem $ml={20}>Slide 23 of 27</StatusItem>
        <StatusItem $ml={46}><NotesSmallIcon /></StatusItem>
        <StatusItem $ml={43}>English (India)</StatusItem>
        <StatusItem $ml={40} $gap={6}><AccessIcon />Accessibility: Investigate</StatusItem>
        <StatusItem $ml={687} $gap={3}><NotesIcon />Notes</StatusItem>
        <StatusItem $ml={36}>
          <ViewButton $active><NormalView /></ViewButton>
          <ViewButton><SorterView /></ViewButton>
          <ViewButton><ReadingView /></ViewButton>
          <ViewButton><ShowView /></ViewButton>
        </StatusItem>
        <StatusItem $ml={7}>
          <Minus size={14} strokeWidth={1.4} />
          <ZoomTrack><ZoomThumb /><ZoomTick /></ZoomTrack>
          <svg width="14" height="14" stroke="#555" strokeWidth="1.2"><path d="M0 7 H14 M7 0 V14" /></svg>
        </StatusItem>
        <StatusItem $ml={27}>61%</StatusItem>
        <StatusItem $ml={32}><FitIcon /></StatusItem>
        <NoteCaret><ChevronUp size={14} strokeWidth={1.4} /></NoteCaret>
      </StatusBar>
    </Shell>
  );
}
